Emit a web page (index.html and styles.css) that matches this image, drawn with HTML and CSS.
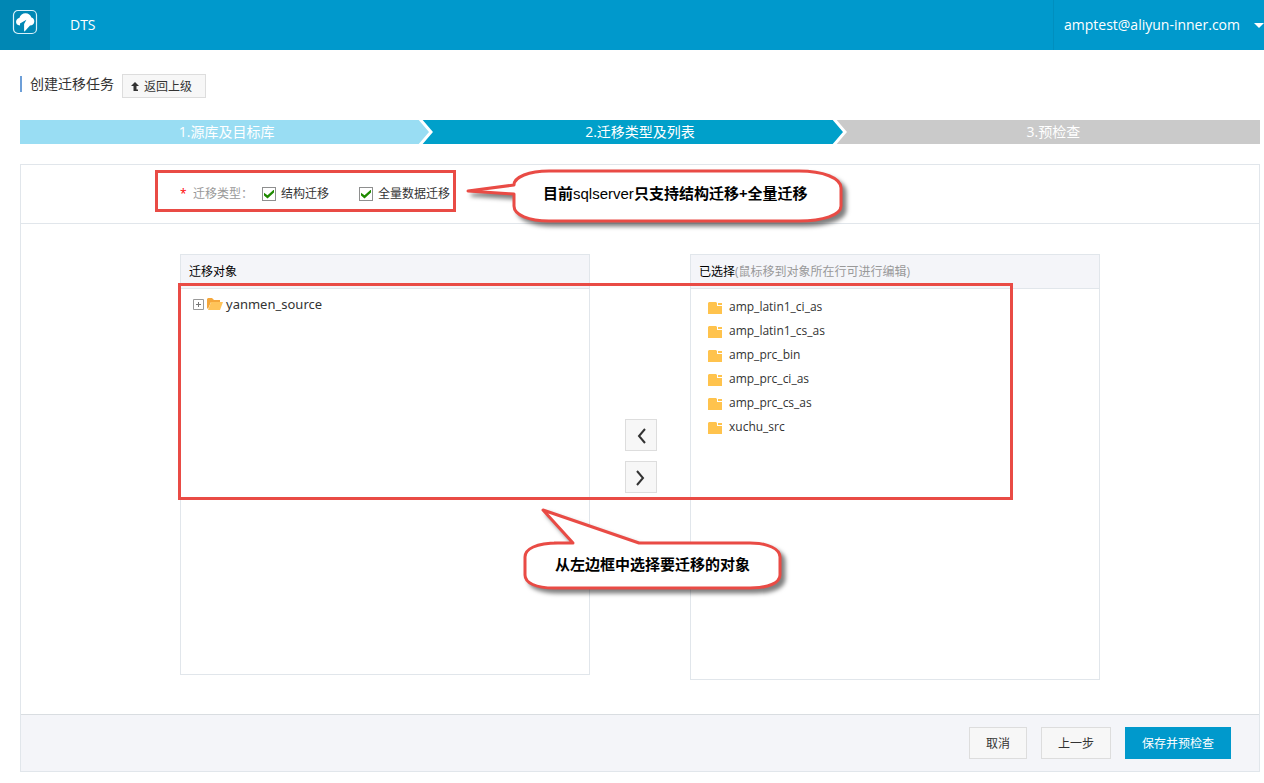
FILE: index.html
```html
<!DOCTYPE html>
<html lang="zh-CN">
<head>
<meta charset="utf-8">
<title>DTS</title>
<link rel="stylesheet" href="styles.css">
</head>
<body>
<svg class="defs" aria-hidden="true">
  <symbol id="folder" viewBox="0 0 14 13"><path fill="#ffc34d" d="M0 2 1 1h7l1 1v3h5v8H0z"/><path fill="#ffc34d" d="M10 2h4v2h-4z"/></symbol>
</svg>
<header class="topbar">
  <a class="logo" href="#" aria-label="主页">
    <svg width="26" height="26" viewBox="0 0 26 26">
      <rect x="1.500" y="1.500" width="23" height="23" rx="4.500" fill="none" stroke="#d9f1fa" stroke-width="1.200"/>
      <path fill="#fff" d="M8 16.500C5 16.500 3.800 14.500 4.100 12.300 4.400 10.200 6 9.200 7.300 9 8.200 6 10.700 4.200 13.500 4.200c2.900 0 5.100 1.700 5.900 4.200 2 .5 3 2.100 2.900 4-.1 2.500-1.900 4.100-4.300 4.100L12.600 22.500l-.5-.3V15l2.300-4.300L8 14.500z"/>
    </svg>
  </a>
  <a class="product" href="#">DTS</a>
  <button class="account" type="button">amptest@aliyun-inner.com<span class="caret"></span></button>
</header>
<main class="page">
  <div class="heading">
    <h1>创建迁移任务</h1>
    <button class="btn btn-small" type="button">
      <svg width="8" height="10" viewBox="0 0 8 10"><path fill="#333" d="M4 0 8 4H5.500v3.500H7V9H2.500V4H0z"/></svg>返回上级
    </button>
  </div>
  <ol class="steps">
    <li class="step done">1.源库及目标库<svg class="arrow" width="15" height="24" viewBox="0 0 15 24"><path class="fill" d="M0 0h2l11 12L2 24H0z"/><path class="edge" d="M1-2 13 12 1 26"/></svg></li>
    <li class="step current">2.迁移类型及列表<svg class="arrow" width="15" height="24" viewBox="0 0 15 24"><path class="fill" d="M0 0h2l11 12L2 24H0z"/><path class="edge" d="M1-2 13 12 1 26"/></svg></li>
    <li class="step">3.预检查</li>
  </ol>
  <form class="panel">
    <div class="types">
      <div class="type-group" role="group" aria-label="迁移类型">
        <span class="star">*</span>
        <span class="type-label">迁移类型：</span>
        <label class="check"><input type="checkbox" checked>结构迁移</label>
        <label class="check"><input type="checkbox" checked>全量数据迁移</label>
        <div class="mark mark-types"></div>
        <div class="callout callout-types">
          <svg width="392" height="68" viewBox="0 0 392 68"><path d="M49 19C49 11 64 5 84 5H334C358 5 376 12 376 22V40C376 49 358 55 334 55H84C64 55 49 49 49 40V28L3 25 49 19z"/></svg>
          <p>目前<span>sqlserver</span>只支持结构迁移+全量迁移</p>
        </div>
      </div>
    </div>
    <div class="transfer">
      <section class="box source">
        <h2>迁移对象</h2>
        <ul class="tree">
          <li>
            <button class="expand" type="button" aria-label="展开"><svg width="11" height="11" viewBox="0 0 11 11"><path fill="#fff" stroke="#999" d="M.5.5h10v10H.5z"/><path stroke="#777" d="M3 5.500h5M5.500 3v5"/></svg></button>
            <svg width="16" height="12" viewBox="0 0 16 12"><path fill="#f5a73b" d="M0 1 1 0h4l2 2h6v2H4L1 11 0 10z"/><path fill="#ffc45a" d="M4 4h12l-3 8H1z"/></svg>
            <span>yanmen_source</span>
          </li>
        </ul>
      </section>
      <div class="movers">
        <button type="button" aria-label="移除"><svg width="10" height="16" viewBox="0 0 10 16"><path d="M9 2 3 9l6 7"/></svg></button>
        <button type="button" aria-label="添加"><svg width="10" height="16" viewBox="0 0 10 16"><path d="m1 2 6 7-6 7"/></svg></button>
      </div>
      <section class="box chosen">
        <h2>已选择<small>(鼠标移到对象所在行可进行编辑)</small></h2>
        <ul class="items">
          <li><svg width="14" height="13"><use href="#folder"/></svg>amp_latin1_ci_as</li>
          <li><svg width="14" height="13"><use href="#folder"/></svg>amp_latin1_cs_as</li>
          <li><svg width="14" height="13"><use href="#folder"/></svg>amp_prc_bin</li>
          <li><svg width="14" height="13"><use href="#folder"/></svg>amp_prc_ci_as</li>
          <li><svg width="14" height="13"><use href="#folder"/></svg>amp_prc_cs_as</li>
          <li><svg width="14" height="13"><use href="#folder"/></svg>xuchu_src</li>
        </ul>
      </section>
      <div class="mark mark-objects"></div>
      <div class="callout callout-objects">
        <svg width="276" height="96" viewBox="0 0 276 96"><path d="M34 38H53L23 5 119 38H230C248 38 260 44 260 52V70C260 78 248 83 230 83H34C16 83 5 78 5 70V52C5 44 16 38 38 38"/></svg>
        <p>从左边框中选择要迁移的对象</p>
      </div>
    </div>
    <div class="actions">
      <button class="btn" type="button">取消</button>
      <button class="btn" type="button">上一步</button>
      <button class="btn btn-primary" type="submit">保存并预检查</button>
    </div>
  </form>
</main>
</body>
</html>
```
FILE: styles.css
```css
* { box-sizing: border-box; }
body {
  margin: 0;
  background: #fff;
  color: #333;
  font: 12px/20px "Open Sans", "Noto Sans CJK SC", sans-serif;
}
button { font: inherit; color: inherit; cursor: pointer; }
ul, ol { list-style: none; margin: 0; padding: 0; }
svg { display: block; flex: none; }
.defs { position: absolute; width: 0; height: 0; }

.topbar {
  display: flex;
  height: 50px;
  background: #0099cc;
  color: #fff;
  font-size: 14px;
}
.logo {
  width: 50px;
  padding: 9px 12px;
  background: #0087b4;
}
.product {
  flex: 1;
  padding: 0 20px;
  color: #fff;
  line-height: 50px;
  text-decoration: none;
}
.account {
  display: flex;
  align-items: center;
  justify-content: space-between;
  min-width: 211px;
  padding: 0 0 0 10px;
  border: 0;
  border-left: 1px solid #008fbf;
  background: none;
}
.caret {
  border: 5px solid transparent;
  border-top-color: #fff;
  border-bottom: 0;
}

.page { padding: 24px 4px 11px 20px; }
.heading {
  display: flex;
  gap: 8px;
  height: 24px;
  margin-bottom: 22px;
}
.heading h1 {
  height: 16px;
  margin: 2px 0 0;
  padding-left: 8px;
  border-left: 2px solid #6d9fd8;
  font-size: 14px;
  font-weight: 400;
  line-height: 16px;
}
.btn {
  height: 32px;
  padding: 1px 16px 0;
  border: 1px solid #ddd;
  background: #f7f7f7;
}
.btn-small {
  display: flex;
  align-items: center;
  gap: 5px;
  height: 24px;
  padding: 1px 13px 0 8px;
}
.btn-primary { border-color: #0099cc; background: #0099cc; color: #fff; }

.steps {
  display: flex;
  margin-bottom: 20px;
  color: #fff;
  font-size: 14px;
  line-height: 24px;
  text-align: center;
}
.step { position: relative; flex: 1; background: #cacaca; }
.done { background: #99ddf3; }
.current { background: #00a0ca; }
.arrow {
  position: absolute;
  top: 0;
  right: 0;
  background: #cacaca;
}
.arrow .fill { fill: #00a0ca; }
.done .arrow { background: #00a0ca; }
.done .fill { fill: #99ddf3; }
.arrow .edge { fill: none; stroke: #fff; stroke-width: 3; }

.panel { border: 1px solid #e1e6eb; }
.types {
  height: 59px;
  padding: 18px 134px;
  border-bottom: 1px solid #e1e6eb;
}
.type-group {
  position: relative;
  display: flex;
  align-items: center;
  height: 22px;
  padding-left: 25px;
}
.star { width: 13px; color: #f00; }
.type-label { width: 69px; color: #999; }
.check {
  display: flex;
  align-items: center;
  gap: 5px;
  margin-right: 30px;
}
.check input {
  appearance: none;
  width: 14px;
  height: 14px;
  margin: 0;
  border: 1px solid #8e8f8f;
  background: #fff;
  display: grid;
  place-items: center;
}
.check input:checked::before {
  content: "";
  width: 10px;
  height: 9px;
  background: #1f8a00;
  clip-path: polygon(0 35%, 35% 65%, 100% 0, 100% 34%, 35% 100%, 0 68%);
}

.transfer {
  position: relative;
  display: flex;
  align-items: flex-start;
  justify-content: center;
  width: 920px;
  margin: 0 auto;
  padding: 30px 0 34px;
}
.box { flex: 1; border: 1px solid #e1e6eb; }
.source { min-height: 421px; }
.chosen { min-height: 426px; }
.box h2 {
  margin: 0;
  padding: 7px 8px 6px;
  border-bottom: 1px solid #e1e6eb;
  background: #f4f5f9;
  color: #000;
  font-size: 12px;
  font-weight: 400;
}
.box small { color: #999; font-size: 12px; }
.tree { padding: 5px 12px; font-family: "Noto Sans", sans-serif; font-size: 13px; }
.tree li { display: flex; align-items: center; gap: 3px; }
.expand { padding: 0; border: 0; background: none; }
.items { padding: 6px 17px; }
.items li {
  display: flex;
  align-items: center;
  gap: 7px;
  line-height: 24px;
}
.movers {
  display: grid;
  gap: 10px;
  width: 100px;
  padding: 165px 0 0 35px;
}
.movers button {
  display: grid;
  place-items: center;
  width: 32px;
  height: 32px;
  padding: 0;
  border: 1px solid #ddd;
  background: #f7f7f7;
}
.movers svg { overflow: visible; }
.movers path { fill: none; stroke: #333; stroke-width: 2; }

.actions {
  display: flex;
  justify-content: flex-end;
  gap: 14px;
  padding: 12px 28px;
  border-top: 1px solid #d9dde1;
  background: #f4f5f9;
}

.mark {
  position: absolute;
  border: 3px solid #e94b45;
  pointer-events: none;
}
.mark-types { left: 0; top: -13px; width: 301px; height: 42px; }
.mark-objects { left: -2px; top: 59px; width: 835px; height: 217px; }
.callout { position: absolute; color: #000; }
.callout svg { filter: drop-shadow(4px 4px 2px rgba(0, 0, 0, .5)); }
.callout path { fill: #fff; stroke: #e94b45; stroke-width: 3; stroke-linejoin: round; }
.callout p {
  position: absolute;
  margin: 0;
  font-size: 15px;
  font-weight: 700;
  white-space: nowrap;
}
.callout span { font-family: "Liberation Sans", sans-serif; font-weight: 400; }
.callout-types { left: 310px; top: -17px; }
.callout-types p { left: 78px; top: 17px; }
.callout-objects { left: 340px; top: 281px; }
.callout-objects p { left: 35px; top: 49px; }
```
